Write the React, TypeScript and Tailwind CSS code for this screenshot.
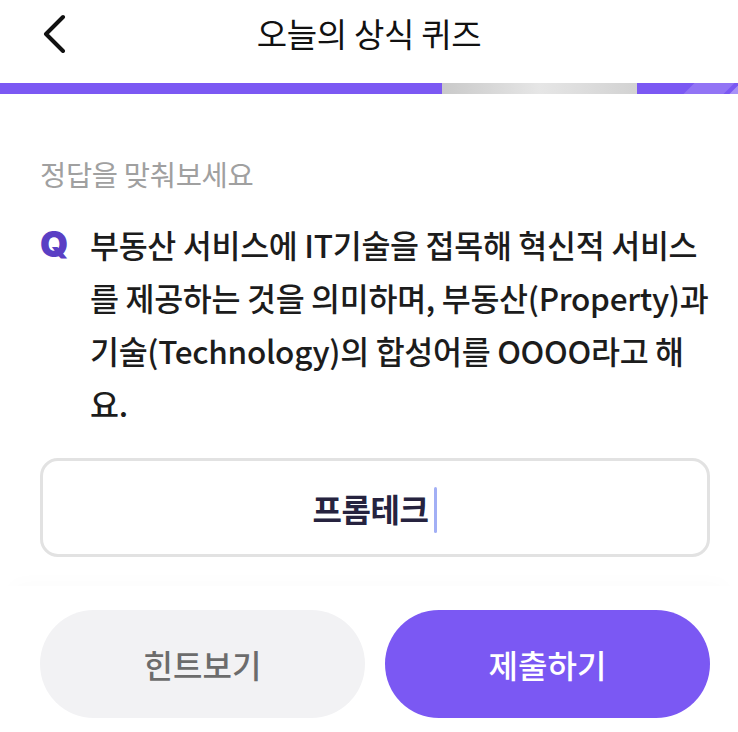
import React from "react";

const font = { fontFamily: '"Noto Sans CJK KR", "Noto Sans", sans-serif' };

const BackIcon = () => (
  <svg width="30" height="40" viewBox="0 0 30 40" fill="none">
    <path d="M23 4 L6 21 L23 38" stroke="#111" strokeWidth="4" strokeLinecap="round" strokeLinejoin="round" />
  </svg>
);

const ProgressBar = () => (
  <div className="flex h-[11px] w-full">
    <div className="w-[442px] bg-[#7b58f3]" />
    <div className="w-[195px] bg-gradient-to-r from-[#c9c9c9] via-[#e6e6e6] to-[#d2d2d2]" />
    <div className="relative flex-1 overflow-hidden bg-[#7b58f3]">
      <div className="absolute inset-y-0 left-[52px] w-[40px] -skew-x-[45deg] bg-[#9274f5]" />
      <div className="absolute inset-y-0 left-[98px] w-[10px] -skew-x-[45deg] bg-[#a891f7]" />
    </div>
  </div>
);

export default function App() {
  return (
    <div className="flex h-[732px] w-[738px] flex-col overflow-hidden bg-white" style={font}>
      <header className="relative flex h-[83px] items-center justify-center">
        <button className="absolute left-[40px] top-[13px]">
          <BackIcon />
        </button>
        <h1 className="mt-[-16px] text-[33px] font-normal tracking-[-0.3px] text-[#111]">오늘의 상식 퀴즈</h1>
      </header>
      <ProgressBar />

      <main className="flex flex-1 flex-col pl-[40px] pr-[28px] pt-[62px]">
        <p className="text-[28.5px] leading-[36px] tracking-[-0.3px] text-[#a0a0a0]">정답을 맞춰보세요</p>

        <div className="mt-[26px] flex gap-[14px]">
          <span
            className="w-[36px] shrink-0 text-[36px] font-black leading-[53px] text-[#5a3fc4]"
            style={{ fontFamily: '"Inter", "Roboto", sans-serif' }}
          >
            Q
          </span>
          <p className="whitespace-nowrap text-[31.5px] font-medium leading-[53px] tracking-[-0.3px] text-[#1c1c1c]">
            부동산 서비스에 IT기술을 접목해 혁신적 서비스
            <br />
            를 제공하는 것을 의미하며, 부동산(Property)과
            <br />
            기술(Technology)의 합성어를 OOOO라고 해
            <br />
            요.
          </p>
        </div>

        <div className="mt-[28px] flex h-[99px] items-center justify-center rounded-[18px] border-[3px] border-[#e2e2e2]">
          <span className="text-[32px] font-bold tracking-[-0.5px] text-[#26233f]">프롬테크</span>
          <span className="ml-[6px] mt-[4px] h-[46px] w-[3px] rounded-full bg-[#a2aff5]" />
        </div>
      </main>

      <footer className="flex gap-[20px] pb-[14px] pl-[40px] pr-[28px] pt-[24px] shadow-[0_-14px_20px_-12px_rgba(0,0,0,0.02)]">
        <button className="h-[108px] flex-1 rounded-full bg-[#f2f2f4] text-[32px] font-medium text-[#6c6c6c]">
          힌트보기
        </button>
        <button className="h-[108px] flex-1 rounded-full bg-[#7b58f3] text-[32px] font-medium text-white">
          제출하기
        </button>
      </footer>
    </div>
  );
}
